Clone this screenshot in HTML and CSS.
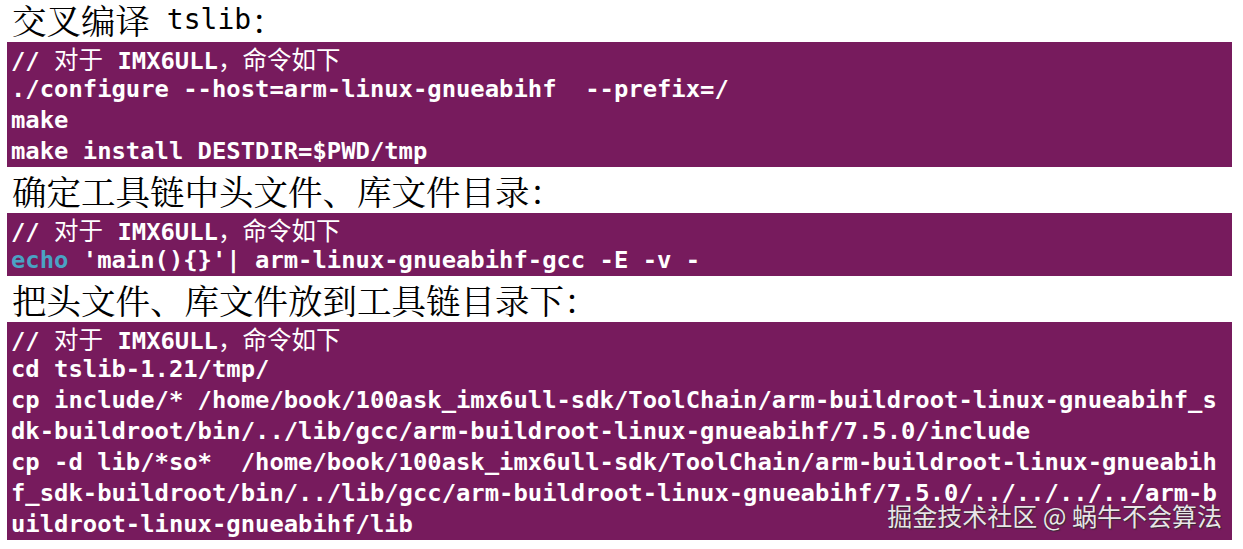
FILE: index.html
```html
<!DOCTYPE html>
<html lang="zh-CN">
<head>
<meta charset="utf-8">
<title>交叉编译 tslib</title>
<link rel="stylesheet" href="styles.css">
</head>
<body>
<main class="doc">
  <h2 class="heading heading-first">交叉编译<span class="lat"> tslib</span>：</h2>
  <div class="code">
    <div class="line">// <span class="cjk">对于</span> IMX6ULL<span class="cjk">，命令如下</span></div>
    <div class="line">./configure --host=arm-linux-gnueabihf  --prefix=/</div>
    <div class="line">make</div>
    <div class="line">make install DESTDIR=$PWD/tmp</div>
  </div>
  <h2 class="heading">确定工具链中头文件、库文件目录：</h2>
  <div class="code">
    <div class="line">// <span class="cjk">对于</span> IMX6ULL<span class="cjk">，命令如下</span></div>
    <div class="line"><span class="kw">echo</span> 'main(){}'| arm-linux-gnueabihf-gcc -E -v -</div>
  </div>
  <h2 class="heading">把头文件、库文件放到工具链目录下：</h2>
  <div class="code">
    <div class="line">// <span class="cjk">对于</span> IMX6ULL<span class="cjk">，命令如下</span></div>
    <div class="line">cd tslib-1.21/tmp/</div>
    <div class="line">cp include/* /home/book/100ask_imx6ull-sdk/ToolChain/arm-buildroot-linux-gnueabihf_s</div>
    <div class="line">dk-buildroot/bin/../lib/gcc/arm-buildroot-linux-gnueabihf/7.5.0/include</div>
    <div class="line">cp -d lib/*so*  /home/book/100ask_imx6ull-sdk/ToolChain/arm-buildroot-linux-gnueabih</div>
    <div class="line">f_sdk-buildroot/bin/../lib/gcc/arm-buildroot-linux-gnueabihf/7.5.0/../../../../arm-b</div>
    <div class="line">uildroot-linux-gnueabihf/lib</div>
  </div>
</main>
<div class="watermark">掘金技术社区 @ 蜗牛不会算法</div>
</body>
</html>
```
FILE: styles.css
```css
html, body {
  margin: 0;
  padding: 0;
  background: #ffffff;
}

body {
  width: 1243px;
  height: 549px;
  overflow: hidden;
  position: relative;
}

.doc {
  display: flex;
  flex-direction: column;
  margin: 0 11px 0 7px;
}

.heading {
  box-sizing: border-box;
  margin: 0;
  height: 46px;
  display: flex;
  align-items: center;
  padding-left: 5px;
  font-family: "Noto Serif CJK SC", "AR PL UMing CN", "Noto Sans CJK SC", serif;
  font-weight: 400;
  font-size: 34.5px;
  color: #000000;
  white-space: pre;
}

.heading-first {
  height: 42px;
  padding-bottom: 4px;
}

.heading .lat {
  font-family: "DejaVu Sans Mono", monospace;
  font-size: 28px;
}

.code {
  background: #771b5d;
  padding: 1px 0 0 4px;
  font-family: "DejaVu Sans Mono", "Noto Sans CJK SC", monospace;
  font-weight: 700;
  font-size: 23.85px;
  color: #ffffff;
}

.line {
  height: 31px;
  line-height: 31px;
  white-space: pre;
}

.cjk {
  font-family: "Noto Sans CJK SC", sans-serif;
  font-weight: 400;
  font-size: 24.5px;
}

.kw {
  color: #4aa2c4;
}

.watermark {
  position: absolute;
  right: 21px;
  top: 498px;
  font-family: "Noto Sans CJK SC", sans-serif;
  font-size: 25px;
  line-height: 34px;
  color: #e9e4e8;
  text-shadow: 0 0 1px #2a1a26, 1px 1px 1px #3a2a36;
}
```
